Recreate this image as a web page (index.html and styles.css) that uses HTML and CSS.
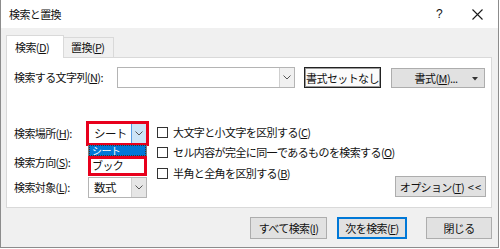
FILE: index.html
```html
<!DOCTYPE html>
<html lang="ja">
<head>
<meta charset="utf-8">
<title>検索と置換</title>
<link rel="stylesheet" href="styles.css">
</head>
<body>
<div class="window">
  <div class="titlebar">
    <span class="title">検索と置換</span>
    <span class="help">?</span>
    <svg class="close" width="11" height="11" viewBox="0 0 11 11"><path d="M0.5 0.5 L10.5 10.5 M10.5 0.5 L0.5 10.5" stroke="#1a1a1a" stroke-width="1.1" fill="none"/></svg>
  </div>
  <div class="body">
    <div class="tabs">
      <div class="tab active">検索(<u>D</u>)</div>
      <div class="tab">置換(<u>P</u>)</div>
    </div>
    <div class="panel">
      <div class="find-row">
        <span class="label wide">検索する文字列(<u>N</u>):</span>
        <div class="combo long">
          <span class="combo-text"></span>
          <span class="combo-btn"><svg width="8" height="5" viewBox="0 0 8 5"><path d="M0.5 0.5 L4 4 L7.5 0.5" stroke="#555" fill="none"/></svg></span>
        </div>
        <div class="btn noformat">書式セットなし</div>
        <div class="btn format">書式(<u>M</u>)... <svg class="caret" width="6" height="4" viewBox="0 0 6 4"><path d="M0 0 H6 L3 3.5 Z" fill="#333"/></svg></div>
      </div>
      <div class="opts">
        <div class="fields">
          <div class="frow">
            <span class="label">検索場所(<u>H</u>):</span>
            <div class="combo small open">
              <span class="combo-text">シート</span>
              <span class="combo-btn"><svg width="8" height="5" viewBox="0 0 8 5"><path d="M0.5 0.5 L4 4 L7.5 0.5" stroke="#555" fill="none"/></svg></span>
              <div class="droplist">
                <div class="item sel">シート</div>
                <div class="item mark">ブック</div>
              </div>
            </div>
          </div>
          <div class="frow r2">
            <span class="label">検索方向(<u>S</u>):</span>
          </div>
          <div class="frow r3">
            <span class="label">検索対象(<u>L</u>):</span>
            <div class="combo small">
              <span class="combo-text">数式</span>
              <span class="combo-btn"><svg width="8" height="5" viewBox="0 0 8 5"><path d="M0.5 0.5 L4 4 L7.5 0.5" stroke="#555" fill="none"/></svg></span>
            </div>
          </div>
        </div>
        <div class="checks">
          <div class="check"><span class="box"></span>大文字と小文字を区別する(<u>C</u>)</div>
          <div class="check"><span class="box"></span>セル内容が完全に同一であるものを検索する(<u>O</u>)</div>
          <div class="check c3"><span class="box"></span>半角と全角を区別する(<u>B</u>)</div>
        </div>
        <div class="btn optbtn">オプション(<u>T</u>)&nbsp; &lt; &lt;</div>
      </div>
    </div>
    <div class="actions">
      <div class="btn act all">すべて検索(<u>I</u>)</div>
      <div class="btn act next">次を検索(<u>F</u>)</div>
      <div class="btn act closebtn">閉じる</div>
    </div>
  </div>
</div>
</body>
</html>
```
FILE: styles.css
```css
* { box-sizing: border-box; }
html, body { margin: 0; padding: 0; background: #ffffff; }
body {
  font-family: "Noto Sans CJK JP", "Noto Sans", sans-serif;
  font-size: 11px;
  letter-spacing: -0.6px;
  color: #111111;
  white-space: nowrap;
}
u { text-decoration: underline; text-underline-offset: 1px; }
.window {
  width: 499px;
  height: 248px;
  border: 1px solid #8c8c8c;
  border-top: none;
  display: flex;
  flex-direction: column;
  background: #f0f0f0;
}
.titlebar {
  height: 28px;
  background: #ffffff;
  display: flex;
  align-items: center;
  padding-left: 8px;
  flex: none;
}
.title { font-size: 11px; }
.help { margin-left: auto; font-size: 12px; margin-right: 30px; font-family: "Liberation Sans", sans-serif; }
.close { margin-right: 15px; }
.body {
  flex: 1;
  padding: 7px 6px 0 5px;
  display: flex;
  flex-direction: column;
}
.tabs { display: flex; align-items: flex-end; height: 22px; position: relative; z-index: 1; }
.tab {
  height: 20px;
  width: 51px;
  border: 1px solid #d9d9d9;
  border-bottom: none;
  margin-left: -1px;
  padding-left: 7px;
  line-height: 19px;
  background: #f0f0f0;
}
.tab.active {
  height: 23px;
  width: 58px;
  margin-left: 0;
  margin-bottom: -1px;
  background: #ffffff;
  padding-left: 8px;
  line-height: 22px;
}
.panel {
  background: #ffffff;
  border: 1px solid #d9d9d9;
  height: 151px;
  padding: 9px 6px 0 7px;
  display: flex;
  flex-direction: column;
}
.find-row { display: flex; align-items: flex-start; }
.label { display: inline-block; width: 74px; line-height: 21px; flex: none; }
.label.wide { width: 103px; }
.combo {
  position: relative;
  display: flex;
  height: 21px;
  border: 1px solid #b4b4b4;
  background: #ffffff;
  flex: none;
}
.combo.long { width: 178px; }
.combo.small { width: 59px; }
.combo-text { flex: 1; padding-left: 5px; line-height: 19px; font-size: 11.5px; }
.combo-btn {
  width: 15px;
  border-left: 1px solid #cfcfcf;
  background: #f0f0f0;
  display: flex;
  align-items: center;
  justify-content: center;
}
.combo.small .combo-btn { background: #e6e6e6; }
.combo.open { outline: 3px solid #e8001c; outline-offset: -1px; z-index: 2; }
.combo.open .combo-btn { background: #cce4f7; border-left: 1px solid #569de5; }
.droplist {
  position: absolute;
  top: 21px;
  left: -1px;
  width: 59px;
  background: #ffffff;
  border: 1px solid #7a7a7a;
  border-top: none;
}
.item { padding-left: 3px; font-size: 11px; }
.item.sel {
  height: 11px;
  line-height: 11px;
  font-size: 10px;
  background: #0078d7;
  color: #ffffff;
  outline: 1px dotted #333;
  outline-offset: -1px;
}
.item.mark {
  height: 18px;
  line-height: 16px;
  margin-top: 1px;
  outline: 3px solid #e8001c;
  outline-offset: -2px;
}
.btn {
  height: 21px;
  background: #e1e1e1;
  border: 1px solid #adadad;
  display: flex;
  align-items: center;
  justify-content: center;
  flex: none;
}
.noformat {
  width: 77px;
  margin-left: 9px;
  background: #fbfbfb;
  border: 1px solid #222;
  box-shadow: inset 0 0 0 1px #9a9a9a;
}
.format {
  width: 94px;
  height: 20px;
  margin-left: 10px;
  margin-top: 1px;
  position: relative;
  padding-right: 4px;
}
.caret { position: absolute; right: 6px; top: 8px; }
.opts { display: flex; margin-top: 34px; flex: 1; padding-bottom: 8px; }
.fields { padding-top: 1px; flex: none; }
.frow { display: flex; height: 21px; }
.frow.r2 { margin-top: 8px; }
.frow.r3 { margin-top: 4px; }
.checks { margin-left: 10px; flex: none; }
.check { display: flex; align-items: center; height: 20px; }
.check.c3 { margin-top: 1px; }
.box {
  width: 11px;
  height: 11px;
  border: 1px solid #333;
  background: #fff;
  margin-right: 5px;
  flex: none;
}
.optbtn {
  width: 91px;
  margin-left: auto;
  margin-right: 1px;
  align-self: flex-end;
  margin-bottom: 2px;
}
.actions { display: flex; justify-content: flex-end; margin-top: 9px; }
.act { height: 22px; }
.all { width: 77px; }
.next { width: 70px; margin-left: 10px; border: 2px solid #0078d7; }
.closebtn { width: 66px; margin-left: 19px; }
```
